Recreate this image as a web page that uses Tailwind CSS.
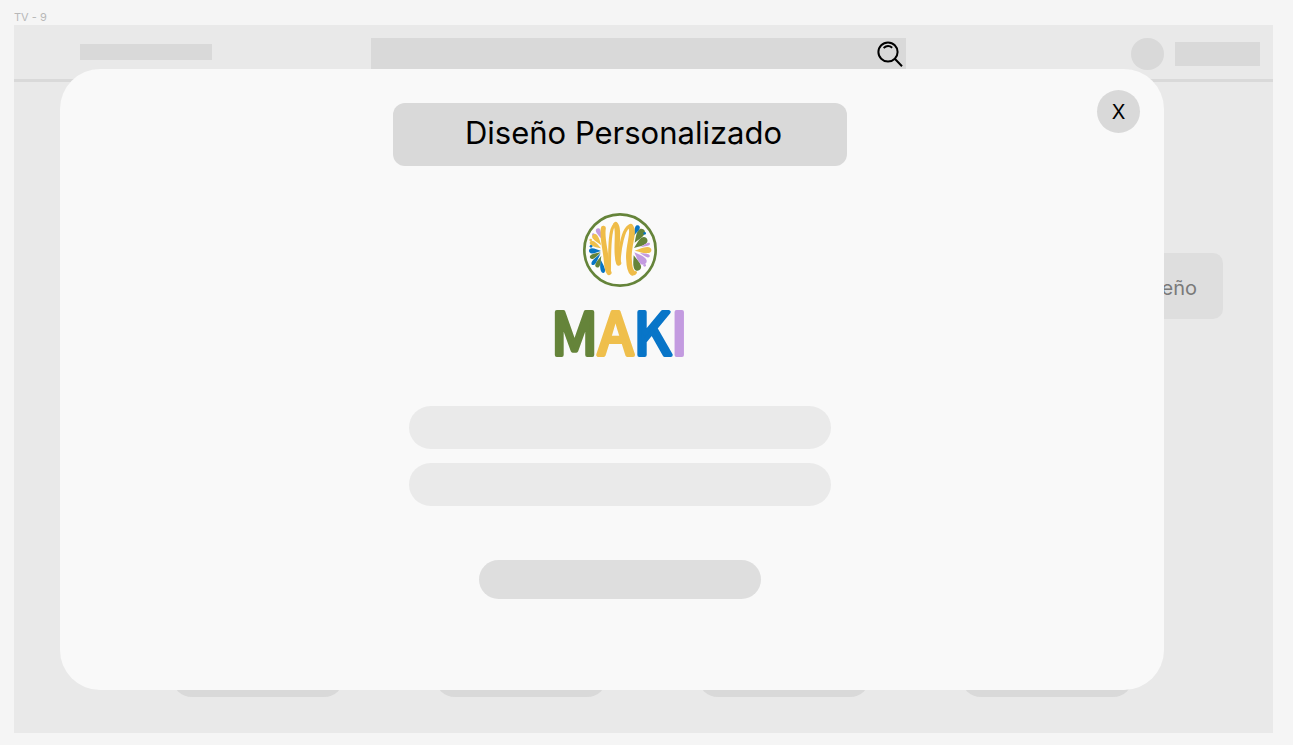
<!DOCTYPE html>
<html lang="es">
<head>
<meta charset="utf-8">
<meta name="viewport" content="width=device-width, initial-scale=1">
<title>Diseño Personalizado</title>
<script src="https://cdn.jsdelivr.net/npm/@tailwindcss/browser@4"></script>
</head>
<body class="flex min-h-screen flex-col bg-[#f5f5f5] pr-5 pb-3 pl-3.5 font-['Inter',sans-serif] text-black">
  <p class="pt-[9px] text-[11px] leading-4 text-[#b8b8b8]">TV - 9</p>
  <div class="relative flex flex-1 flex-col bg-[#e9e9e9]">
    <header class="flex h-[57px] items-center border-b-3 border-[#d9d9d9] pt-[3px] pr-[13px] pl-[66px]">
      <div class="mb-1 h-4 w-[132px] bg-[#d9d9d9]"></div>
      <div class="ml-[159px] flex h-[31px] flex-1 items-center bg-[#d9d9d9] pr-[3px]">
        <input type="search" aria-label="Buscar" class="h-full min-w-0 flex-1 px-3 outline-none">
        <button type="button" aria-label="Buscar">
          <svg class="h-[26px] w-[26px]" viewBox="0 0 26 26" fill="none" stroke="#000" stroke-width="2">
            <circle cx="11" cy="11" r="9.6"/>
            <path d="M17.8 17.8 25 25.2M6.6 7Q11 3.2 15.2 6.8"/>
          </svg>
        </button>
      </div>
      <div class="ml-[225px] h-8 w-[33px] rounded-full bg-[#d9d9d9]"></div>
      <div class="ml-[11px] h-6 w-[85px] bg-[#d9d9d9]"></div>
    </header>
    <main class="flex flex-1 flex-col justify-between pt-[171px] pb-9">
      <button type="button" class="mr-[50px] h-[66px] w-44 self-end rounded-[10px] bg-[#dedede] pt-1 pr-[26px] text-right text-xl text-[#7a7a7a]">Diseño</button>
      <div class="flex justify-between pr-[140px] pl-[158px]">
        <div class="h-10 w-[172px] rounded-[20px] bg-[#d9d9d9]"></div>
        <div class="h-10 w-[172px] rounded-[20px] bg-[#d9d9d9]"></div>
        <div class="h-10 w-[172px] rounded-[20px] bg-[#d9d9d9]"></div>
        <div class="h-10 w-[172px] rounded-[20px] bg-[#d9d9d9]"></div>
      </div>
    </main>

    <section role="dialog" aria-labelledby="titulo" class="absolute top-11 right-[109px] bottom-[43px] left-[46px] flex flex-col items-center rounded-[40px] bg-[#f9f9f9] pt-[34px] pl-[15px]">
      <button type="button" aria-label="Cerrar" class="absolute top-[21px] right-6 h-[43px] w-[43px] rounded-full bg-[#d9d9d9] text-xl">X</button>
      <h1 id="titulo" class="h-[63px] w-[454px] rounded-xl bg-[#d9d9d9] pl-2 text-center text-[31px] leading-[59px]">Diseño Personalizado</h1>

      <svg class="mt-[46px] h-[76px] w-[76px] shrink-0" viewBox="33 22 228 228" role="img" aria-label="Emblema Maki">
        <defs>
          <path id="petal" d="M0 0C14-5 24-11 36-11C52-11 52 11 36 11C24 11 14 5 0 0Z"/>
          <path id="leaf" d="M0 0C14-4 20-7 27-7C37-7 37 7 27 7C20 7 14 4 0 0Z"/>
        </defs>
        <circle cx="147" cy="136" r="107" fill="#fcfcfb" stroke="#65843a" stroke-width="8"/>
        <!-- right petals -->
        <g fill="#65843a">
          <use href="#petal" transform="translate(191 114) rotate(-57)"/>
          <use href="#petal" transform="translate(189 130) rotate(-37)"/>
          <use href="#petal" transform="translate(188 152) rotate(72)"/>
        </g>
        <g fill="#0875c4">
          <use href="#leaf" transform="translate(188 94) rotate(-65)"/>
          <circle cx="221" cy="86" r="4"/>
        </g>
        <use href="#petal" fill="#efc04c" transform="translate(191 138) rotate(-3) scale(1.05 .85)"/>
        <g fill="#c39be0">
          <use href="#petal" transform="translate(190 143) rotate(45)"/>
          <use href="#leaf" transform="translate(207 145) rotate(20) scale(.9 .7)"/>
          <use href="#leaf" transform="translate(208 128) rotate(-22) scale(.9 .6)"/>
          <circle cx="221" cy="182" r="4"/>
        </g>
        <!-- left petals -->
        <g fill="#c39be0">
          <use href="#leaf" transform="translate(92 103) rotate(-113)"/>
          <circle cx="67" cy="90" r="4"/>
        </g>
        <g fill="#efc04c">
          <use href="#petal" transform="translate(91 122) rotate(-127) scale(.85 .75)"/>
          <use href="#petal" transform="translate(90 131) rotate(-149) scale(.8 .65)"/>
          <circle cx="59" cy="106" r="4"/>
        </g>
        <g fill="#0875c4">
          <use href="#petal" transform="translate(90 139) rotate(181) scale(.75 .7)"/>
          <use href="#leaf" transform="translate(89 146) rotate(127) scale(1.25 .85)"/>
          <use href="#petal" transform="translate(88 163) rotate(77) scale(.9 .6)"/>
          <circle cx="60" cy="125" r="4"/>
        </g>
        <g fill="#65843a">
          <use href="#petal" transform="translate(89 143) rotate(152) scale(.75 .6)"/>
          <use href="#leaf" transform="translate(91 153) rotate(112) scale(1.1 1)"/>
        </g>
        <!-- brush monogram -->
        <g fill="none" stroke="#efbc48" stroke-linecap="round" stroke-linejoin="round">
          <path d="M115 204C117 170 112 72 131 60M144 175C147 125 157 76 174 65" stroke-width="9"/>
          <path d="M97 71C92 100 104 135 106 170Q108 197 114 204" stroke-width="15"/>
          <path d="M134 60C147 75 131 140 143 175" stroke-width="16"/>
          <path d="M179 66C192 82 170 125 174 165Q175 196 184 204" stroke-width="17"/>
          <path d="M182 206Q190 211 194 203" stroke-width="8"/>
        </g>
      </svg>

      <svg class="h-[104px] w-[148px] shrink-0 font-['Noto_Sans_CJK_JP',sans-serif]" viewBox="0 0 148 104" font-size="58" stroke-width="4" stroke-linejoin="round" role="img" aria-label="MAKI">
        <text x="5" y="67"><tspan fill="#65843a" stroke="#65843a">M</tspan><tspan fill="#efbf4c" stroke="#efbf4c">A</tspan><tspan fill="#0875c8" stroke="#0875c8">K</tspan><tspan fill="#c39be0" stroke="#c39be0">I</tspan></text>
      </svg>

      <form class="mt-3.5 flex w-full flex-col items-center">
        <input type="text" aria-label="Primer campo" class="h-[43px] w-[422px] rounded-full bg-[#eaeaea] px-5 outline-none">
        <input type="text" aria-label="Segundo campo" class="mt-3.5 h-[43px] w-[422px] rounded-full bg-[#eaeaea] px-5 outline-none">
        <button type="button" aria-label="Continuar" class="mt-[54px] h-[39px] w-[282px] rounded-full bg-[#dedede]"></button>
      </form>
    </section>
  </div>
</body>
</html>
